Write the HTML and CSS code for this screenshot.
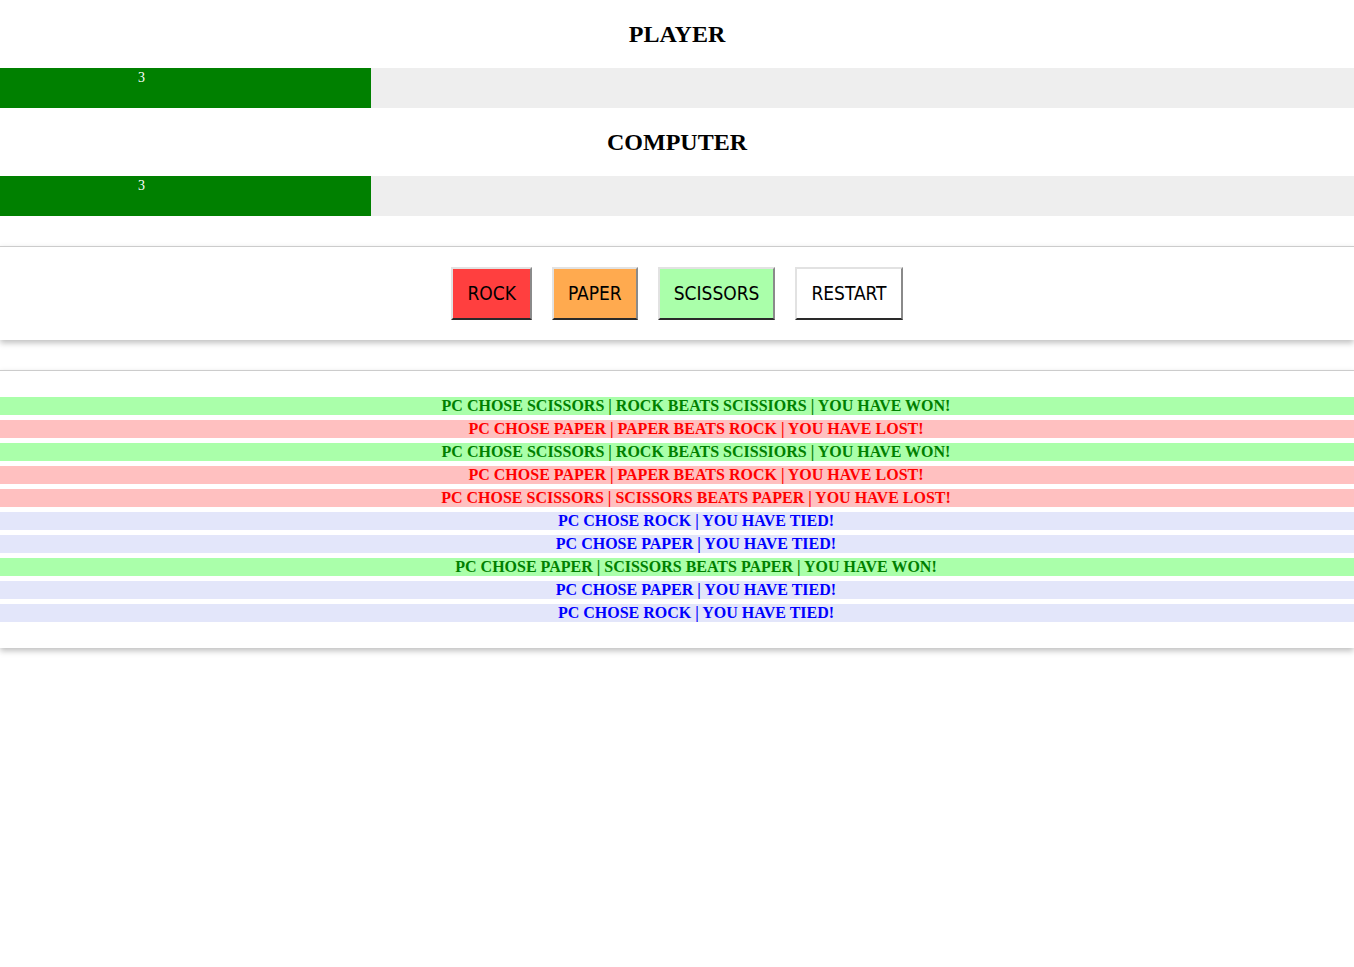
FILE: index.html
```html
<!DOCTYPE html>
<html>
<head>
<meta charset="utf-8">
<title>Rock Paper Scissors</title>
<link rel="stylesheet" href="styles.css">
</head>
<body>
<section class="scores">
  <h2 class="title">PLAYER</h2>
  <div class="bar"><div class="fill" style="width: 371px">3</div></div>
  <h2 class="title">COMPUTER</h2>
  <div class="bar"><div class="fill" style="width: 371px">3</div></div>
</section>

<section class="panel controls">
  <button class="btn rock">ROCK</button>
  <button class="btn paper">PAPER</button>
  <button class="btn scissors">SCISSORS</button>
  <button class="btn restart">RESTART</button>
</section>

<section class="panel results">
  <div class="row won">PC CHOSE SCISSORS | ROCK BEATS SCISSIORS | YOU HAVE WON!</div>
  <div class="row lost">PC CHOSE PAPER | PAPER BEATS ROCK | YOU HAVE LOST!</div>
  <div class="row won">PC CHOSE SCISSORS | ROCK BEATS SCISSIORS | YOU HAVE WON!</div>
  <div class="row lost">PC CHOSE PAPER | PAPER BEATS ROCK | YOU HAVE LOST!</div>
  <div class="row lost">PC CHOSE SCISSORS | SCISSORS BEATS PAPER | YOU HAVE LOST!</div>
  <div class="row tied">PC CHOSE ROCK | YOU HAVE TIED!</div>
  <div class="row tied">PC CHOSE PAPER | YOU HAVE TIED!</div>
  <div class="row won">PC CHOSE PAPER | SCISSORS BEATS PAPER | YOU HAVE WON!</div>
  <div class="row tied">PC CHOSE PAPER | YOU HAVE TIED!</div>
  <div class="row tied">PC CHOSE ROCK | YOU HAVE TIED!</div>
</section>
</body>
</html>
```

FILE: styles.css
```css
html, body {
  margin: 0;
  padding: 0;
  background: #ffffff;
}

body {
  font-family: "Liberation Serif", "Times New Roman", serif;
  color: #000;
  min-height: 100vh;
}

.scores {
  padding-bottom: 30px;
}

.title {
  margin: 20px 0;
  font-size: 24px;
  line-height: 28px;
  font-weight: bold;
  text-align: center;
}

.bar {
  height: 40px;
  background: #eeeeee;
}

.fill {
  height: 40px;
  background: #008000;
  color: #ffffff;
  font-size: 14px;
  line-height: 18px;
  padding-left: 138px;
  padding-top: 1px;
  box-sizing: border-box;
}

.panel {
  border-top: 1px solid #cccccc;
  box-shadow: 0 3px 6px rgba(0, 0, 0, 0.25);
}

.controls {
  display: flex;
  justify-content: center;
  gap: 20px;
  padding: 20px 0 20px;
  margin-bottom: 30px;
}

.btn {
  font-family: "DejaVu Sans Condensed", "DejaVu Sans", sans-serif;
  font-stretch: condensed;
  font-size: 19px;
  line-height: 21px;
  padding: 14px 14px;
  color: #000;
  border-top: 2px solid #e2e2e2;
  border-left: 2px solid #e2e2e2;
  border-right: 2px solid #8a8a8a;
  border-bottom: 2px solid #2a2a2a;
  cursor: pointer;
}

.rock { background: #ff3f3f; }
.paper { background: #ffaa4f; }
.scissors { background: #aaffaa; }
.restart { background: #ffffff; }

.results {
  padding: 26px 0 26px;
  margin-bottom: 40px;
}

.row {
  height: 18px;
  line-height: 18px;
  font-size: 16px;
  font-weight: bold;
  text-align: center;
  margin-bottom: 5px;
  padding-left: 38px;
}

.row:last-child {
  margin-bottom: 0;
}

.won { background: #aaffaa; color: #008000; }
.lost { background: #ffc0c0; color: #ff0000; }
.tied { background: #e3e6fa; color: #0000ff; }
```
